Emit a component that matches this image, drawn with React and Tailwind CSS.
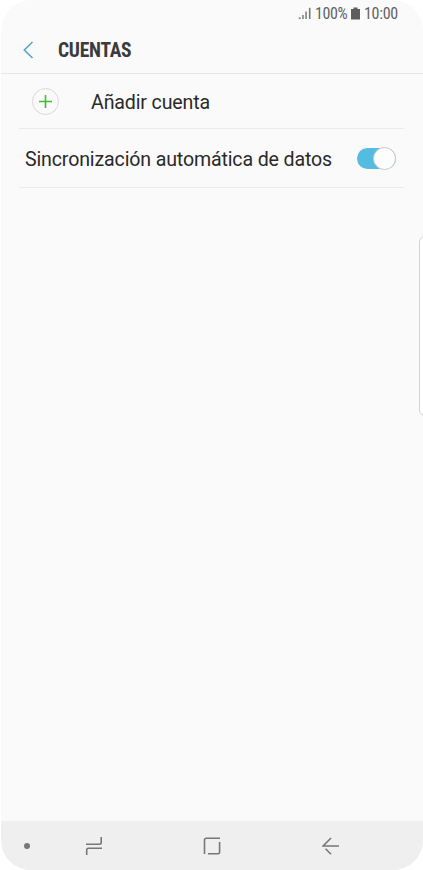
import { useState } from 'react';

function SignalIcon() {
  return (
    <svg width="13" height="13" viewBox="0 0 13 13" fill="#7a7a7a">
      <rect x="0.8" y="10.4" width="1.8" height="1.6" />
      <rect x="4.2" y="8" width="1.5" height="4" />
      <rect x="7.3" y="4.5" width="1.5" height="7.5" />
      <rect x="10.9" y="0.8" width="1.6" height="11.2" />
    </svg>
  );
}

function BatteryIcon() {
  return (
    <svg width="9" height="13" viewBox="0 0 9 13" fill="#5e5e5e">
      <path d="M2.5 0.5h4V2H9v10.5H0V2h2.5z" />
    </svg>
  );
}

function StatusBar() {
  return (
    <div className="flex h-[26px] items-center pl-[297px] font-['Roboto_Condensed',Roboto,sans-serif] text-[16px] leading-none tracking-[-0.4px] text-[#626262] [font-stretch:75%]">
      <SignalIcon />
      <span className="ml-1 w-8 pt-px whitespace-nowrap">100%</span>
      <span className="ml-[4px]">
        <BatteryIcon />
      </span>
      <span className="ml-1 pt-px tracking-[-0.3px] whitespace-nowrap">10:00</span>
    </div>
  );
}

function Header() {
  return (
    <header className="flex h-12 items-center border-b border-[#e6e6e6] pl-[22px]">
      <button type="button" aria-label="Atrás">
        <svg width="11" height="18" viewBox="0 0 11 18" fill="none" stroke="#55a5c8" strokeWidth="1.6">
          <path d="M9.5 1L1.3 9l8.2 8" />
        </svg>
      </button>
      <h1 className="ml-6 pt-0.5 font-['Roboto_Condensed',Roboto,sans-serif] text-[19.5px] leading-none font-bold tracking-[-0.25px] text-[#3b3b3b] [font-stretch:75%]">
        CUENTAS
      </h1>
    </header>
  );
}

function Toggle({ checked, onChange }) {
  return (
    <button
      type="button"
      role="switch"
      aria-checked={checked}
      aria-label="Sincronización automática de datos"
      onClick={() => onChange(!checked)}
      className={`flex h-[21px] w-[39px] items-center rounded-full ${
        checked ? 'justify-end bg-[#55bce1]' : 'justify-start bg-gray-300'
      }`}
    >
      <span className="-my-px size-[23px] shrink-0 rounded-full border border-[#c9c9c9] bg-[#fdfdfd]" />
    </button>
  );
}

function NavBar() {
  return (
    <nav className="flex h-[49px] items-center bg-[#efefef] pl-[23px] text-[#777777]">
      <span className="size-[6px] rounded-full bg-[#777777]" />
      <svg className="ml-[55px]" width="18" height="20" viewBox="0 0 18 20" fill="none" stroke="currentColor" strokeWidth="1.6">
        <path d="M1 8.2h13.5q1.7 0 1.7-1.7V1M1.7 19v-5q0-1.7 1.7-1.7H17" />
      </svg>
      <svg className="ml-[100px]" width="18" height="18" viewBox="0 0 18 18" fill="none" stroke="currentColor" strokeWidth="1.6">
        <path d="M1.5 17V3q0-1.7 1.7-1.7H17M16.6 5v10q0 1.7-1.7 1.7H5" />
      </svg>
      <svg className="ml-[101px]" width="18" height="18" viewBox="0 0 18 18" fill="none" stroke="currentColor" strokeWidth="1.6">
        <path d="M9 1L1.2 9H17M3.6 11.8L9 17.2" />
      </svg>
    </nav>
  );
}

export default function App() {
  const [autoSync, setAutoSync] = useState(true);

  return (
    <div className="h-[870px] w-[423px] overflow-hidden bg-white">
      <div className="relative ml-px flex h-[870px] w-[422px] flex-col overflow-hidden rounded-[30px] bg-[#fafafa] font-[Roboto,sans-serif] text-[#2a2a2a]">
        <StatusBar />
        <Header />

        <main className="flex-1 pr-[19px] pl-[18px]">
          {/* Add account */}
          <div className="flex h-[55px] items-center border-b border-[#ebebeb] pl-[13px]">
            <span className="flex size-[27px] items-center justify-center rounded-full border border-[#d9d9d9]">
              <svg width="13" height="13" viewBox="0 0 13 13" fill="none" stroke="#3fc12f" strokeWidth="1.6">
                <path d="M6.5 0v13M0 6.5h13" />
              </svg>
            </span>
            <span className="ml-8 pt-1 text-[19.6px] tracking-[-0.15px]">Añadir cuenta</span>
          </div>

          {/* Auto sync */}
          <div className="flex h-[59px] items-center justify-between border-b border-[#ebebeb] pr-2 pl-[6px]">
            <span className="pt-[3px] text-[19.6px] tracking-[-0.15px] whitespace-nowrap">Sincronización automática de datos</span>
            <Toggle checked={autoSync} onChange={setAutoSync} />
          </div>
        </main>

        <NavBar />

        {/* Edge panel handle */}
        <div className="absolute top-[236px] -right-1 h-[180px] w-[8px] rounded-l-[6px] border border-[#d2d2d2] bg-white" />
      </div>
    </div>
  );
}
